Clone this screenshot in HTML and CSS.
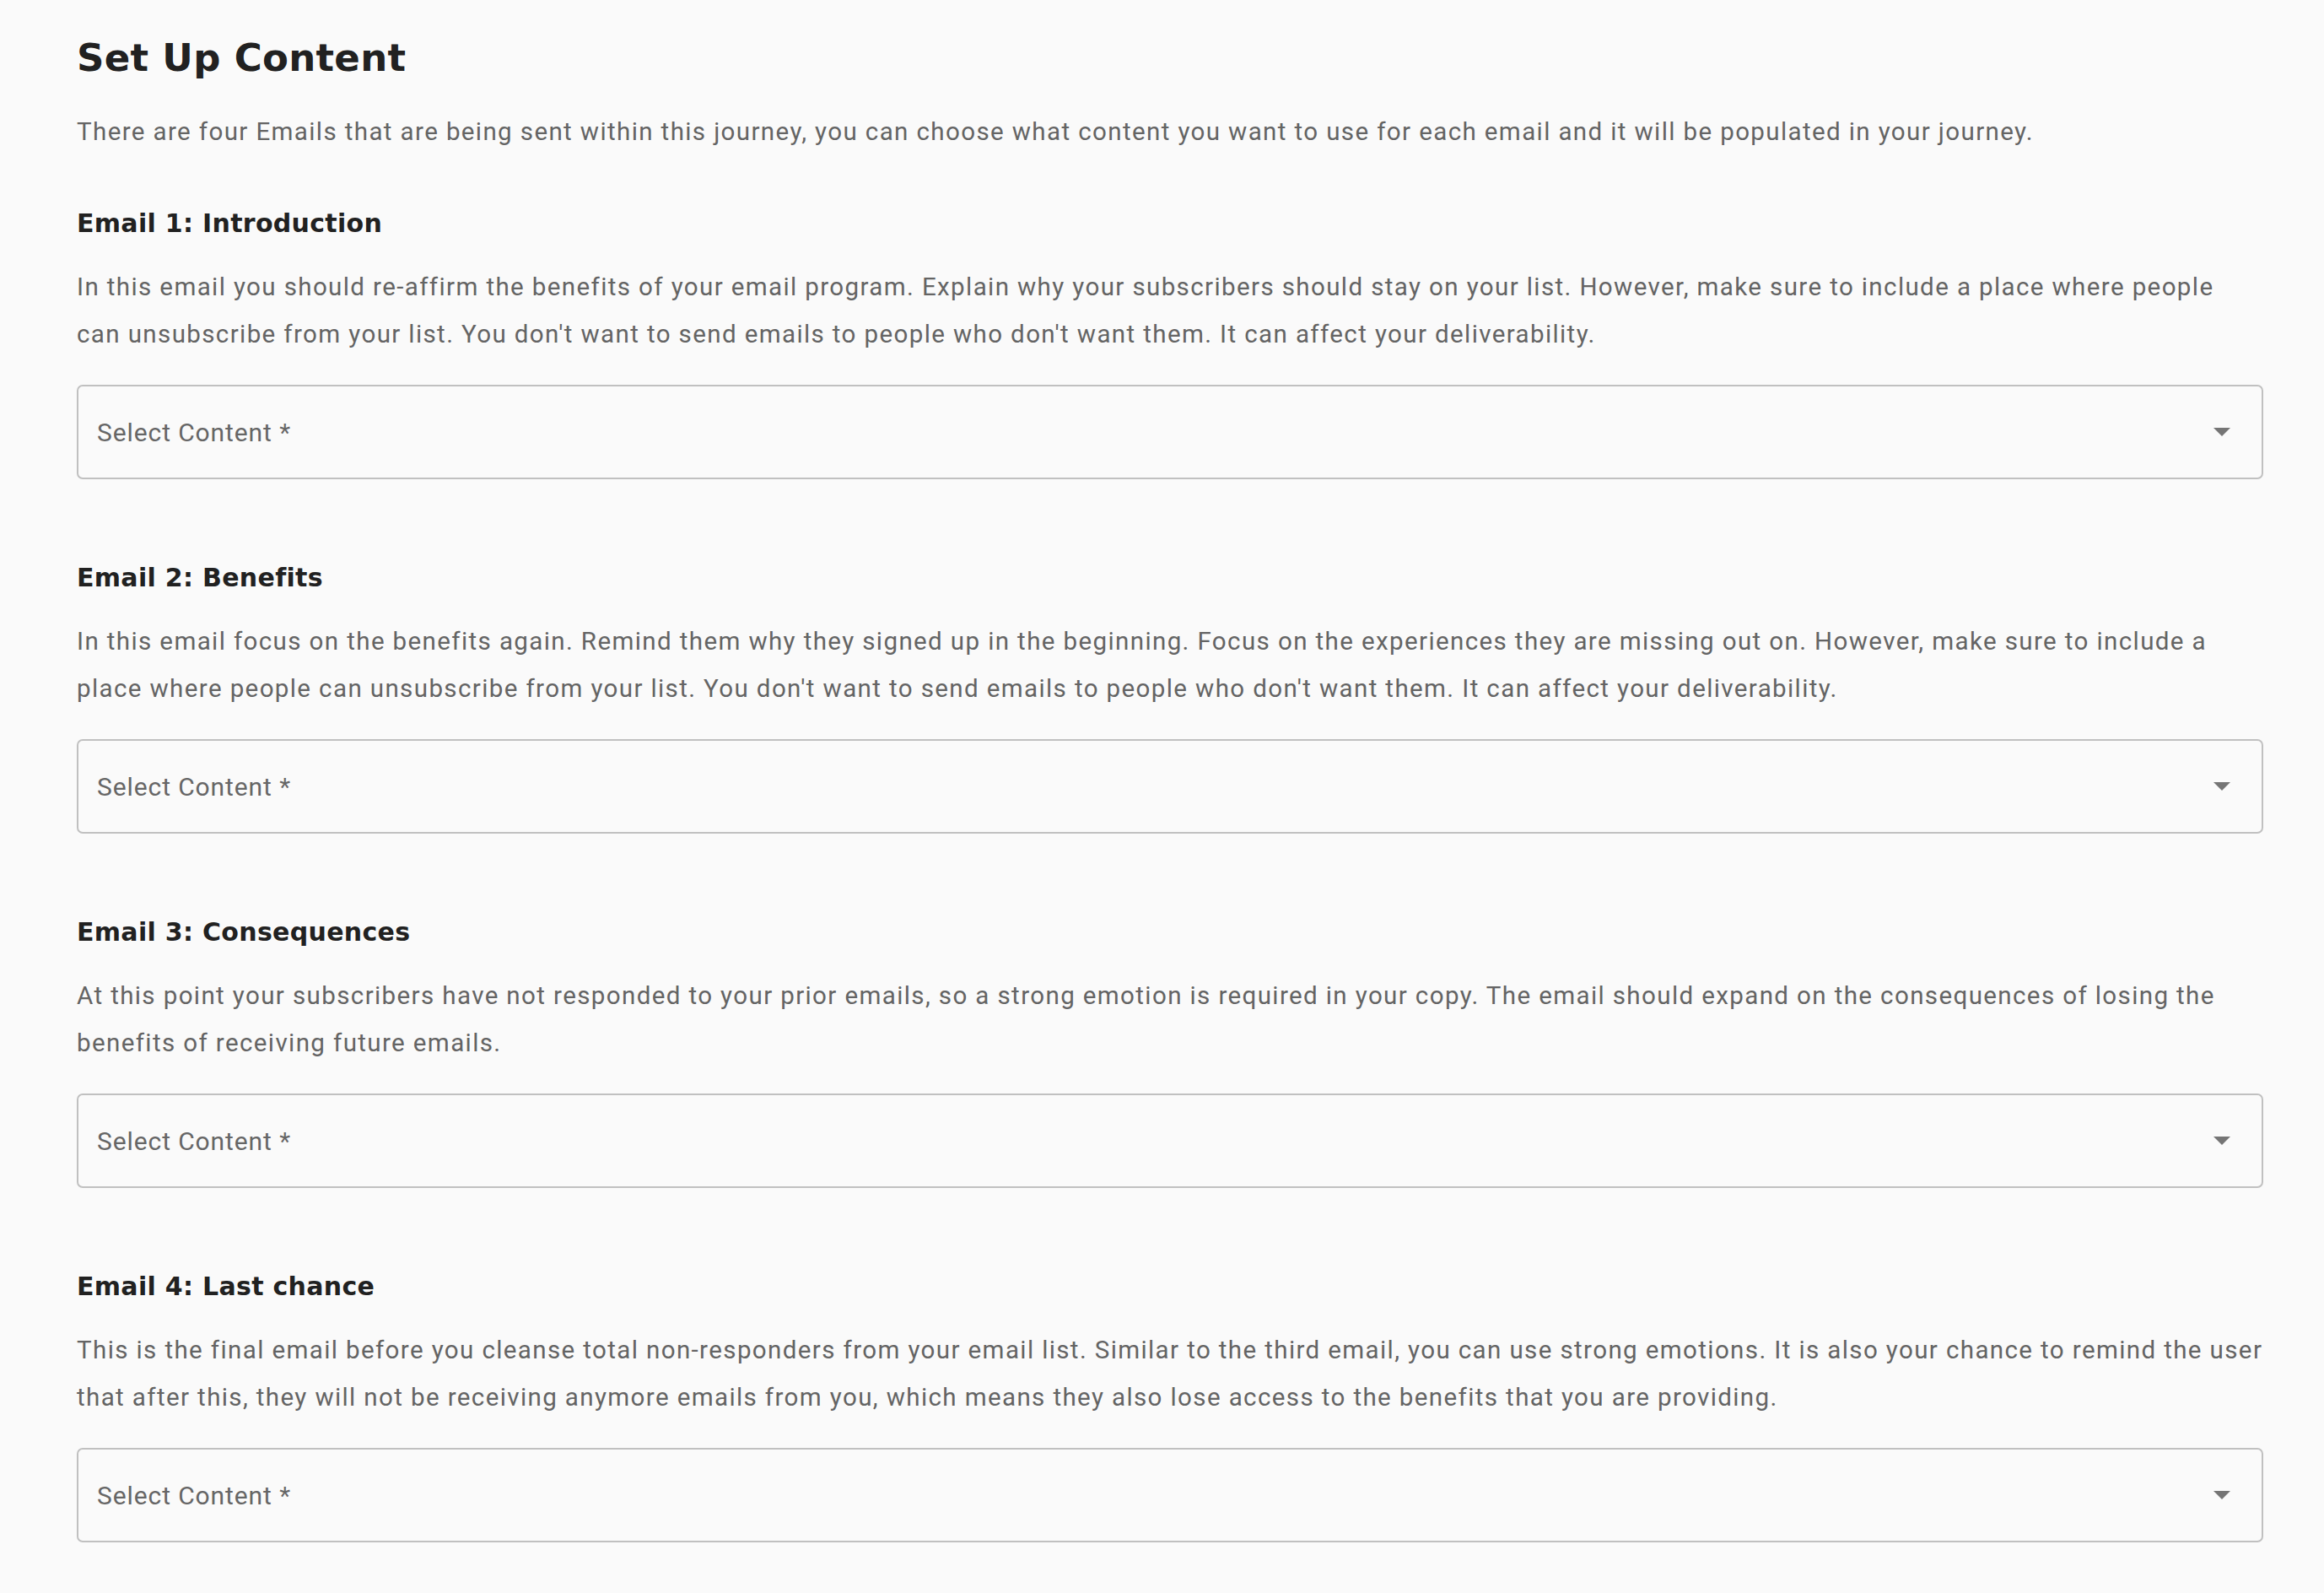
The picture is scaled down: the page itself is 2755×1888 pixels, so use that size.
FILE: index.html
```html
<!DOCTYPE html>
<html lang="en" dir="ltr">
  <head>
    <meta charset="utf-8">
    <title>Set Up Content</title>
    <link rel="stylesheet" href="styles.css">
  </head>
  <body>
    <div class="page">
      <h1 class="title">Set Up Content</h1>
      <p class="intro">There are four Emails that are being sent within this journey, you can choose what content you want to use for each email and it will be populated in your journey.</p>

      <div class="email">
        <h2 class="email-title">Email 1: Introduction</h2>
        <p class="email-text">In this email you should re-affirm the benefits of your email program. Explain why your subscribers should stay on your list. However, make sure to include a place where people can unsubscribe from your list. You don't want to send emails to people who don't want them. It can affect your deliverability.</p>
        <div class="select">
          <span class="select-label">Select Content *</span>
          <svg class="select-arrow" width="20" height="10" viewBox="0 0 20 10"><path d="M0 0h20L10 10z"/></svg>
        </div>
      </div>

      <div class="email">
        <h2 class="email-title">Email 2: Benefits</h2>
        <p class="email-text">In this email focus on the benefits again. Remind them why they signed up in the beginning. Focus on the experiences they are missing out on. However, make sure to include a place where people can unsubscribe from your list. You don't want to send emails to people who don't want them. It can affect your deliverability.</p>
        <div class="select">
          <span class="select-label">Select Content *</span>
          <svg class="select-arrow" width="20" height="10" viewBox="0 0 20 10"><path d="M0 0h20L10 10z"/></svg>
        </div>
      </div>

      <div class="email">
        <h2 class="email-title">Email 3: Consequences</h2>
        <p class="email-text">At this point your subscribers have not responded to your prior emails, so a strong emotion is required in your copy. The email should expand on the consequences of losing the benefits of receiving future emails.</p>
        <div class="select">
          <span class="select-label">Select Content *</span>
          <svg class="select-arrow" width="20" height="10" viewBox="0 0 20 10"><path d="M0 0h20L10 10z"/></svg>
        </div>
      </div>

      <div class="email">
        <h2 class="email-title">Email 4: Last chance</h2>
        <p class="email-text">This is the final email before you cleanse total non-responders from your email list. Similar to the third email, you can use strong emotions. It is also your chance to remind the user that after this, they will not be receiving anymore emails from you, which means they also lose access to the benefits that you are providing.</p>
        <div class="select">
          <span class="select-label">Select Content *</span>
          <svg class="select-arrow" width="20" height="10" viewBox="0 0 20 10"><path d="M0 0h20L10 10z"/></svg>
        </div>
      </div>
    </div>
  </body>
</html>
```

FILE: styles.css
```css
html, body{
  margin: 0;
  background-color: #fafafa;
}
.page{
  padding: 37px 72px 60px 91px;
  display: flex;
  flex-direction: column;
}
.title{
  margin: 0;
  font-family: "DejaVu Sans", sans-serif;
  font-weight: 700;
  font-size: 45px;
  line-height: 64px;
  letter-spacing: 0.3px;
  color: #212121;
}
.intro{
  margin: 27px 0 0 0;
  font-family: Roboto, "Liberation Sans", sans-serif;
  font-size: 29.55px;
  line-height: 56px;
  letter-spacing: 1.37px;
  color: #646464;
}
.email{
  display: flex;
  flex-direction: column;
  margin-top: 61px;
}
.email + .email{
  margin-top: 97px;
}
.email-title{
  margin: 0;
  font-family: "DejaVu Sans", sans-serif;
  font-weight: 700;
  font-size: 30px;
  line-height: 40px;
  letter-spacing: 0.3px;
  color: #212121;
}
.email-text{
  margin: 27px 0 0 0;
  font-family: Roboto, "Liberation Sans", sans-serif;
  font-size: 29.55px;
  line-height: 56px;
  letter-spacing: 1.37px;
  color: #646464;
}
.select{
  margin-top: 32px;
  height: 112px;
  box-sizing: border-box;
  border: 2px solid #c0c0c0;
  border-radius: 7px;
  display: flex;
  align-items: center;
  justify-content: space-between;
  padding: 0 37px 0 22px;
}
.select-label{
  font-family: Roboto, "Liberation Sans", sans-serif;
  font-size: 30px;
  letter-spacing: 0.9px;
  color: #666666;
}
.select-arrow{
  fill: #757575;
}
```
